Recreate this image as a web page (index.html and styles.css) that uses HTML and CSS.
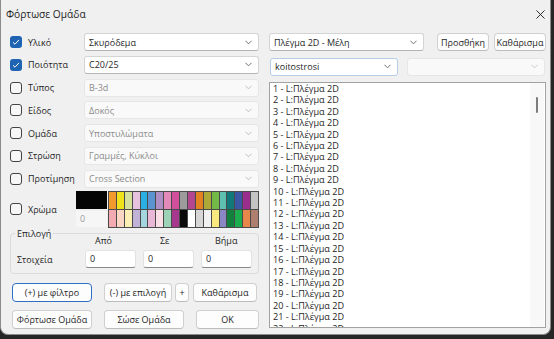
FILE: index.html
```html
<!DOCTYPE html>
<html lang="el">
<head>
    <meta charset="UTF-8">
    <meta name="viewport" content="width=device-width, initial-scale=1.0">
    <title>Φόρτωσε Ομάδα</title>
    <link rel="stylesheet" href="styles.css">
</head>
<body>
    <div class="window">
        <div class="titlebar">
            <span class="title">Φόρτωσε Ομάδα</span>
            <svg class="close" width="10" height="10" viewBox="0 0 10 10"><path d="M0.5 0.5L9.5 9.5M9.5 0.5L0.5 9.5" stroke="#1b1b1b" stroke-width="1"/></svg>
        </div>
        <div class="content">
            <div class="left">
                <div class="row">
                    <span class="check on"><svg viewBox="0 0 12 12"><path d="M3 6.3L5 8.2L9 3.9" fill="none" stroke="#fff" stroke-width="1"/></svg></span>
                    <span class="label">Υλικό</span>
                    <div class="select"><span>Σκυρόδεμα</span><svg class="chev" viewBox="0 0 8 5"><path d="M0.5 0.5L4 4L7.5 0.5" fill="none" stroke="#5c5c5c"/></svg></div>
                </div>
                <div class="row">
                    <span class="check on"><svg viewBox="0 0 12 12"><path d="M3 6.3L5 8.2L9 3.9" fill="none" stroke="#fff" stroke-width="1"/></svg></span>
                    <span class="label">Ποιότητα</span>
                    <div class="select"><span>C20/25</span><svg class="chev" viewBox="0 0 8 5"><path d="M0.5 0.5L4 4L7.5 0.5" fill="none" stroke="#5c5c5c"/></svg></div>
                </div>
                <div class="row">
                    <span class="check"></span>
                    <span class="label">Τύπος</span>
                    <div class="select disabled"><span>B-3d</span><svg class="chev" viewBox="0 0 8 5"><path d="M0.5 0.5L4 4L7.5 0.5" fill="none" stroke="#b8b8b8"/></svg></div>
                </div>
                <div class="row">
                    <span class="check"></span>
                    <span class="label">Είδος</span>
                    <div class="select disabled"><span>Δοκός</span><svg class="chev" viewBox="0 0 8 5"><path d="M0.5 0.5L4 4L7.5 0.5" fill="none" stroke="#b8b8b8"/></svg></div>
                </div>
                <div class="row">
                    <span class="check"></span>
                    <span class="label">Ομάδα</span>
                    <div class="select disabled"><span>Υποστυλώματα</span><svg class="chev" viewBox="0 0 8 5"><path d="M0.5 0.5L4 4L7.5 0.5" fill="none" stroke="#b8b8b8"/></svg></div>
                </div>
                <div class="row">
                    <span class="check"></span>
                    <span class="label">Στρώση</span>
                    <div class="select disabled"><span>Γραμμές, Κύκλοι</span><svg class="chev" viewBox="0 0 8 5"><path d="M0.5 0.5L4 4L7.5 0.5" fill="none" stroke="#b8b8b8"/></svg></div>
                </div>
                <div class="row">
                    <span class="check"></span>
                    <span class="label">Προτίμηση</span>
                    <div class="select disabled"><span>Cross Section</span><svg class="chev" viewBox="0 0 8 5"><path d="M0.5 0.5L4 4L7.5 0.5" fill="none" stroke="#b8b8b8"/></svg></div>
                </div>
                <div class="color-row">
                    <span class="check"></span>
                    <span class="label">Χρώμα</span>
                    <div class="swatch-col">
                        <div class="current"></div>
                        <div class="index">0</div>
                    </div>
                    <div class="palette">
                        <span style="background:#f29a2e"></span>
                        <span style="background:#f1e31b"></span>
                        <span style="background:#d5e09a"></span>
                        <span style="background:#e6c2de"></span>
                        <span style="background:#2aafe3"></span>
                        <span style="background:#5b93d1"></span>
                        <span style="background:#ae8fc3"></span>
                        <span style="background:#e48ab8"></span>
                        <span style="background:#d24f9b"></span>
                        <span style="background:#9c9c9c"></span>
                        <span style="background:#b2468f"></span>
                        <span style="background:#e38221"></span>
                        <span style="background:#aea837"></span>
                        <span style="background:#72b947"></span>
                        <span style="background:#5dc0b0"></span>
                        <span style="background:#11797a"></span>
                        <span style="background:#3a57a3"></span>
                        <span style="background:#9b2d8c"></span>
                        <span style="background:#c3c3c3"></span>
                        <span style="background:#f3aab0"></span>
                        <span style="background:#fbd6c5"></span>
                        <span style="background:#fcefb6"></span>
                        <span style="background:#c1b2d8"></span>
                        <span style="background:#a5d5df"></span>
                        <span style="background:#e9b8d7"></span>
                        <span style="background:#fadfe7"></span>
                        <span style="background:#9ed2b7"></span>
                        <span style="background:#a6398d"></span>
                        <span style="background:#0a0a0a"></span>
                        <span style="background:#ffffff"></span>
                        <span style="background:#d6d6d6"></span>
                        <span style="background:#f1f1f1"></span>
                        <span style="background:#f9e97e"></span>
                        <span style="background:#8b87c3"></span>
                        <span style="background:#13803d"></span>
                        <span style="background:#1dac4e"></span>
                        <span style="background:#e8874a"></span>
                        <span style="background:#ae7f6f"></span>
                    </div>
                </div>
                <fieldset class="group">
                    <legend>Επιλογή</legend>
                    <div class="group-grid">
                        <span></span>
                        <span class="head from">Από</span>
                        <span class="head to">Σε</span>
                        <span class="head step">Βήμα</span>
                        <span class="name">Στοιχεία</span>
                        <div class="field">0</div>
                        <div class="field">0</div>
                        <div class="field">0</div>
                    </div>
                </fieldset>
                <div class="btn-row first">
                    <button class="btn default w80">(+) με φίλτρο</button>
                    <button class="btn w68">(-) με επιλογή</button>
                    <button class="btn w14">+</button>
                    <button class="btn w64">Καθάρισμα</button>
                </div>
                <div class="btn-row second">
                    <button class="btn w80">Φόρτωσε Ομάδα</button>
                    <button class="btn w80">Σώσε Ομάδα</button>
                    <button class="btn w63">OK</button>
                </div>
            </div>
            <div class="right">
                <div class="rrow top">
                    <div class="select mesh"><span>Πλέγμα 2D - Μέλη</span><svg class="chev" viewBox="0 0 8 5"><path d="M0.5 0.5L4 4L7.5 0.5" fill="none" stroke="#5c5c5c"/></svg></div>
                    <button class="btn small add">Προσθήκη</button>
                    <button class="btn small">Καθάρισμα</button>
                </div>
                <div class="rrow">
                    <div class="select focus"><span>koitostrosi</span><svg class="chev" viewBox="0 0 8 5"><path d="M0.5 0.5L4 4L7.5 0.5" fill="none" stroke="#5c5c5c"/></svg></div>
                    <div class="select disabled empty"><span></span><svg class="chev" viewBox="0 0 8 5"><path d="M0.5 0.5L4 4L7.5 0.5" fill="none" stroke="#c4c4c4"/></svg></div>
                </div>
                <div class="listbox">
                    <div class="items">
                        <div>1 - L:Πλέγμα 2D</div>
                        <div>2 - L:Πλέγμα 2D</div>
                        <div>3 - L:Πλέγμα 2D</div>
                        <div>4 - L:Πλέγμα 2D</div>
                        <div>5 - L:Πλέγμα 2D</div>
                        <div>6 - L:Πλέγμα 2D</div>
                        <div>7 - L:Πλέγμα 2D</div>
                        <div>8 - L:Πλέγμα 2D</div>
                        <div>9 - L:Πλέγμα 2D</div>
                        <div>10 - L:Πλέγμα 2D</div>
                        <div>11 - L:Πλέγμα 2D</div>
                        <div>12 - L:Πλέγμα 2D</div>
                        <div>13 - L:Πλέγμα 2D</div>
                        <div>14 - L:Πλέγμα 2D</div>
                        <div>15 - L:Πλέγμα 2D</div>
                        <div>16 - L:Πλέγμα 2D</div>
                        <div>17 - L:Πλέγμα 2D</div>
                        <div>18 - L:Πλέγμα 2D</div>
                        <div>19 - L:Πλέγμα 2D</div>
                        <div>20 - L:Πλέγμα 2D</div>
                        <div>21 - L:Πλέγμα 2D</div>
                        <div>22 - L:Πλέγμα 2D</div>
                    </div>
                    <div class="scroll"><div class="thumb"></div></div>
                </div>
            </div>
        </div>
    </div>
</body>
</html>
```

FILE: styles.css
```css
body {
    margin: 0;
    background: #262626;
    font-family: "Open Sans", "Roboto", sans-serif;
    font-size: 9px;
    color: #1f1f1f;
}
.window {
    width: 551px;
    height: 335px;
    box-sizing: border-box;
    background: #f0f0f0;
    border: 1px solid #8c8c8c;
    border-top: none;
    border-radius: 0 0 8px 8px;
    overflow: hidden;
    white-space: nowrap;
}
.titlebar {
    height: 28px;
    display: flex;
    align-items: center;
    justify-content: space-between;
    padding: 0 5px 0 5px;
}
.title {
    font-size: 10.2px;
}
.close {
    width: 9px;
    height: 9px;
}
.content {
    display: flex;
    gap: 10px;
    padding: 5px 0 0 7px;
}
.left {
    width: 251px;
}
.row {
    display: flex;
    align-items: center;
    height: 18px;
    margin-bottom: 4.8px;
}
.check {
    width: 12px;
    height: 12px;
    flex: none;
    box-sizing: border-box;
    margin: 0 6px 0 2px;
    border: 1px solid #444;
    border-radius: 3px;
    background: #f7f7f7;
}
.check.on {
    border: none;
    background: #1f63b3;
}
.check svg {
    display: block;
    width: 12px;
    height: 12px;
}
.label {
    flex: 1;
    min-width: 0;
}
.select {
    width: 175px;
    height: 18px;
    flex: none;
    box-sizing: border-box;
    display: flex;
    align-items: center;
    justify-content: space-between;
    padding: 0 6px 0 4px;
    background: #fff;
    border: 1px solid #d4d4d4;
    border-bottom-color: #b4b4b4;
    border-radius: 3px;
}
.select.disabled {
    background: #f9f9f9;
    border-color: #e6e6e6;
    color: #8c8c8c;
}
.chev {
    width: 7px;
    height: 5px;
}
.color-row {
    display: flex;
    align-items: center;
    height: 37px;
    margin-top: -2px;
}
.swatch-col {
    width: 31px;
    flex: none;
    margin-right: 1px;
}
.current {
    height: 18px;
    background: #050505;
}
.index {
    height: 16px;
    margin-top: 2px;
    padding-left: 4px;
    background: #f6f6f6;
    color: #9a9a9a;
    line-height: 16px;
}
.palette {
    display: grid;
    grid-template-columns: repeat(19, 1fr);
    gap: 1px;
    width: 151px;
    height: 37px;
    flex: none;
    box-sizing: border-box;
    padding: 1px;
    background: #4a4a4a;
}
.group {
    margin: 0 0 0 2px;
    padding: 0 0 5px 0;
    border: 1px solid #dadada;
    border-radius: 4px;
}
.group legend {
    margin-left: 4px;
    padding: 0 2px;
    line-height: 11px;
}
.group-grid {
    display: grid;
    grid-template-columns: 61px 51px 51px 51px;
    grid-template-rows: 12px 18px;
    column-gap: 7px;
    row-gap: 3.5px;
    padding-left: 6px;
    margin-top: -4px;
    align-items: center;
}
.head.from { padding-left: 10px; }
.head.to { padding-left: 17px; }
.head.step { padding-left: 14px; }
.field {
    height: 18px;
    box-sizing: border-box;
    padding-left: 4px;
    line-height: 16px;
    background: #fff;
    border: 1px solid #e2e2e2;
    border-bottom: 1px solid #8a8a8a;
    border-radius: 3px;
}
.btn-row {
    display: flex;
    margin-left: 4px;
}
.btn-row.first {
    margin-top: 8.5px;
}
.btn-row.second {
    margin-top: 8.5px;
}
.btn {
    height: 19px;
    flex: none;
    padding: 0;
    font-family: inherit;
    font-size: 9px;
    color: #1f1f1f;
    white-space: nowrap;
    background: #fdfdfd;
    border: 1px solid #d0d0d0;
    border-bottom-color: #bcbcbc;
    border-radius: 4px;
}
.btn.default {
    border: 1px solid #2f6fc4;
}
.w80 { width: 80px; margin-right: 12px; }
.w68 { width: 68px; margin-right: 3px; }
.w14 { width: 14px; margin-right: 4px; }
.w64 { width: 64px; }
.w63 { width: 63px; }
.right {
    width: 277px;
}
.rrow {
    display: flex;
    align-items: center;
    margin-bottom: 6.5px;
}
.select.mesh {
    width: 155px;
    margin-right: 13px;
}
.btn.small {
    width: 52px;
    height: 18px;
}
.btn.add {
    margin-right: 5px;
}
.select.focus {
    width: 128px;
    margin: 0 9px 0 1px;
    border-color: #b6cde8;
}
.select.empty {
    width: 138px;
}
.listbox {
    height: 246px;
    box-sizing: border-box;
    display: flex;
    background: #fff;
    border: 1px solid #a2a2a2;
    overflow: hidden;
}
.items {
    flex: 1;
    padding-left: 3px;
    font-size: 9.1px;
    line-height: 11.4px;
}
.scroll {
    width: 14px;
    margin-right: 1px;
    background: #f8f8f8;
    padding-top: 14px;
}
.thumb {
    width: 2px;
    height: 16px;
    margin-left: 6px;
    border-radius: 1px;
    background: #7c7c7c;
}
```
